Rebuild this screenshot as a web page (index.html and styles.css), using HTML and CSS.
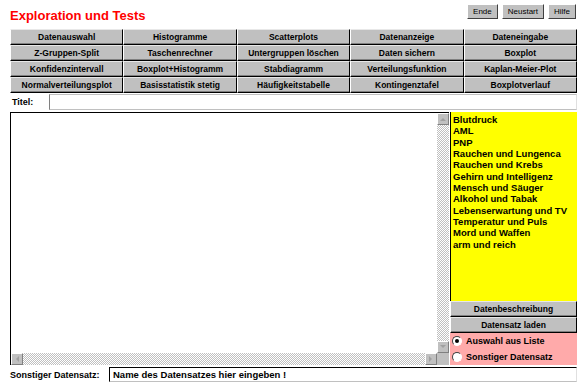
FILE: index.html
```html
<!DOCTYPE html>
<html lang="de">
<head>
    <meta charset="UTF-8">
    <meta name="viewport" content="width=device-width, initial-scale=1.0">
    <title>Exploration und Tests</title>
    <link rel="stylesheet" href="styles.css">
</head>
<body>
    <div class="app">
        <div class="header">
            <h1>Exploration und Tests</h1>
            <div class="top-buttons">
                <button class="small-btn">Ende</button>
                <button class="small-btn">Neustart</button>
                <button class="small-btn">Hilfe</button>
            </div>
        </div>

        <div class="menu-grid">
            <button class="menu-btn">Datenauswahl</button>
            <button class="menu-btn">Histogramme</button>
            <button class="menu-btn">Scatterplots</button>
            <button class="menu-btn">Datenanzeige</button>
            <button class="menu-btn">Dateneingabe</button>
            <button class="menu-btn">Z-Gruppen-Split</button>
            <button class="menu-btn">Taschenrechner</button>
            <button class="menu-btn">Untergruppen löschen</button>
            <button class="menu-btn">Daten sichern</button>
            <button class="menu-btn">Boxplot</button>
            <button class="menu-btn">Konfidenzintervall</button>
            <button class="menu-btn">Boxplot+Histogramm</button>
            <button class="menu-btn">Stabdiagramm</button>
            <button class="menu-btn">Verteilungsfunktion</button>
            <button class="menu-btn">Kaplan-Meier-Plot</button>
            <button class="menu-btn">Normalverteilungsplot</button>
            <button class="menu-btn">Basisstatistik stetig</button>
            <button class="menu-btn">Häufigkeitstabelle</button>
            <button class="menu-btn">Kontingenztafel</button>
            <button class="menu-btn">Boxplotverlauf</button>
        </div>

        <div class="title-row">
            <label class="field-label">Titel:</label>
            <div class="field title-field"></div>
        </div>

        <div class="main">
            <div class="text-area">
                <div class="text-body"></div>
                <div class="vscroll">
                    <span class="arrow arrow-up"></span>
                    <span class="track"></span>
                    <span class="arrow arrow-down"></span>
                </div>
                <div class="hscroll">
                    <span class="arrow arrow-left"></span>
                    <span class="track"></span>
                    <span class="arrow arrow-right"></span>
                </div>
                <div class="corner"></div>
            </div>

            <div class="side">
                <ul class="data-list">
                    <li>Blutdruck</li>
                    <li>AML</li>
                    <li>PNP</li>
                    <li>Rauchen und Lungenca</li>
                    <li>Rauchen und Krebs</li>
                    <li>Gehirn und Intelligenz</li>
                    <li>Mensch und Säuger</li>
                    <li>Alkohol und Tabak</li>
                    <li>Lebenserwartung und TV</li>
                    <li>Temperatur und Puls</li>
                    <li>Mord und Waffen</li>
                    <li>arm und reich</li>
                </ul>
                <button class="menu-btn side-btn">Datenbeschreibung</button>
                <button class="menu-btn side-btn">Datensatz laden</button>
                <div class="radio-box">
                    <div class="radio-row"><span class="radio checked"></span>Auswahl aus Liste</div>
                    <div class="radio-row"><span class="radio"></span>Sonstiger Datensatz</div>
                </div>
            </div>
        </div>

        <div class="bottom-row">
            <label class="field-label other-label">Sonstiger Datensatz:</label>
            <div class="field name-field">Name des Datensatzes hier eingeben !</div>
        </div>
    </div>
</body>
</html>
```

FILE: styles.css
```css
body {
    margin: 0;
    background: #fff;
    font-family: "Liberation Sans", Arial, sans-serif;
    color: #000;
}

.app {
    width: 567px;
    padding-left: 10px;
}

.header {
    height: 29px;
    display: flex;
    justify-content: space-between;
    align-items: flex-start;
}

h1 {
    margin: 0;
    padding-top: 8px;
    font-size: 13px;
    line-height: 15px;
    font-weight: bold;
    color: #f00;
}

.top-buttons {
    display: flex;
    gap: 4px;
    margin-top: 4px;
    margin-right: 1px;
}

.small-btn {
    height: 15px;
    padding: 0 5px;
    background: #c0c0c0;
    border: 1px solid;
    border-color: #fff #404040 #404040 #fff;
    font-family: inherit;
    font-size: 8px;
    color: #000;
}

.menu-grid {
    display: grid;
    grid-template-columns: repeat(5, 1fr);
}

.menu-btn {
    height: 16px;
    padding: 0;
    background: #c0c0c0;
    border: 1px solid;
    border-color: #e8e8e8 #000 #000 #fff;
    box-shadow: inset 0 -1px #808080;
    font-family: inherit;
    font-size: 8.5px;
    font-weight: bold;
    color: #000;
    text-align: center;
    white-space: nowrap;
}

.title-row {
    display: flex;
    height: 16px;
    margin-top: 1px;
}

.field-label {
    font-size: 9px;
    font-weight: bold;
    line-height: 16px;
    padding-left: 2px;
    width: 37px;
}

.field {
    flex: 1;
    background: #fff;
    border-left: 1px solid #808080;
    border-top: 1px solid #c0c0c0;
    border-bottom: 1px solid #c0c0c0;
    border-right: 1px solid #e0e0e0;
}

.main {
    display: flex;
    height: 253px;
    margin-top: 2px;
}

.text-area {
    width: 439px;
    display: grid;
    grid-template-columns: 1fr 12px;
    grid-template-rows: 1fr 12px;
    border-left: 1px solid #000;
    border-top: 1px solid #000;
    box-sizing: border-box;
}

.text-body {
    background: #fff;
}

.vscroll {
    display: flex;
    flex-direction: column;
}

.hscroll {
    display: flex;
}

.track {
    flex: 1;
    background-color: #fff;
    background-image: repeating-conic-gradient(#c0c0c0 0% 25%, #fff 0% 50%);
    background-size: 2px 2px;
}

.arrow {
    width: 12px;
    height: 12px;
    box-sizing: border-box;
    background: #c0c0c0;
    border: 1px solid;
    border-color: #fff #808080 #808080 #fff;
    position: relative;
    flex: none;
}

.arrow::after {
    content: "";
    position: absolute;
    left: 50%;
    top: 50%;
    transform: translate(-50%, -50%);
    border: 3px solid transparent;
}

.arrow-up::after {
    border-bottom-color: #a0a0a0;
    margin-top: -1px;
}

.arrow-down::after {
    border-top-color: #a0a0a0;
    margin-top: 1px;
}

.arrow-left::after {
    border-right-color: #a0a0a0;
    margin-left: -1px;
}

.arrow-right::after {
    border-left-color: #a0a0a0;
    margin-left: 1px;
}

.corner {
    background: #c0c0c0;
}

.side {
    width: 127px;
    margin-left: 1px;
    display: flex;
    flex-direction: column;
}

.data-list {
    flex: 1;
    margin: 0;
    padding: 2px 0 0 2px;
    list-style: none;
    background: #ff0;
    border-left: 1px solid #000;
    font-size: 9.5px;
    font-weight: bold;
    line-height: 11.35px;
    white-space: nowrap;
    overflow: hidden;
}

.side-btn {
    width: 100%;
}

.radio-box {
    height: 32px;
    background: #ffaaaa;
    display: flex;
    flex-direction: column;
    justify-content: center;
    gap: 5px;
    font-size: 9px;
    font-weight: bold;
}

.radio-row {
    display: flex;
    align-items: center;
    gap: 4px;
    padding-left: 2px;
    line-height: 11px;
}

.radio {
    width: 10px;
    height: 10px;
    box-sizing: border-box;
    border-radius: 50%;
    background: #fff;
    border: 1px solid;
    border-color: #404040 #fff #fff #404040;
    position: relative;
}

.radio.checked::after {
    content: "";
    position: absolute;
    left: 2px;
    top: 2px;
    width: 4px;
    height: 4px;
    border-radius: 50%;
    background: #000;
}

.bottom-row {
    display: flex;
    height: 15px;
    margin-top: 2px;
}

.other-label {
    width: 99px;
    padding-left: 0;
    line-height: 17px;
}

.name-field {
    border-left: 1px solid #000;
    border-top: 1px solid #000;
    font-size: 9.5px;
    font-weight: bold;
    line-height: 13px;
    padding-left: 3px;
}
```
